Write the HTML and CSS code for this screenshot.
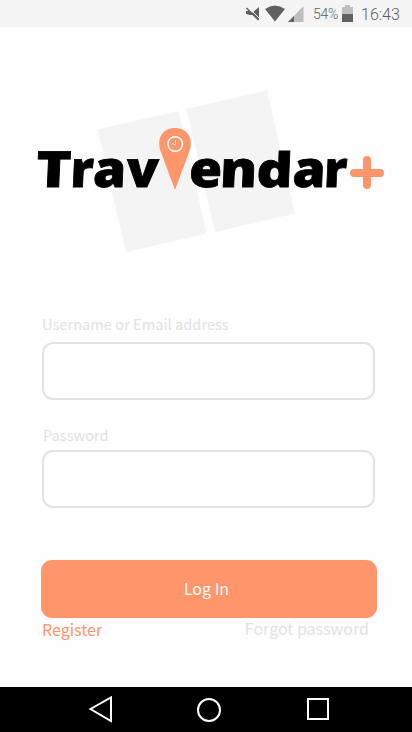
FILE: index.html
```html
<!DOCTYPE html>
<html lang="en">
<head>
<meta charset="utf-8">
<title>Travlendar+</title>
<link rel="stylesheet" href="styles.css">
</head>
<body>
<header class="status">
  <svg class="status-icons" width="70" height="27" viewBox="244 0 70 27">
    <path fill="#606060" d="M246 11h4l2 2 7-6v13l-6-5h-3l-4-1z"/>
    <path stroke="#f4f4f4" stroke-width="1" d="M248 7l12 12"/>
    <path stroke="#606060" stroke-width="1.5" d="M246.500 8l12 12"/>
    <path fill="#606060" d="M265 9q10-7 20 0L275 21.500z"/>
    <path fill="#bebebe" d="M303.500 6v16H288z"/>
    <path fill="#606060" d="M294 16v6h-6z"/>
  </svg>
  <span class="percent">54%</span>
  <svg class="battery" width="11" height="17" viewBox="0 0 11 17">
    <path fill="#bebebe" d="M0 2h3V0h5v2h3v8H0z"/>
    <path fill="#606060" d="M0 9h11v8H0z"/>
  </svg>
  <time class="clock">16:43</time>
</header>
<main class="screen">
  <svg class="logo" width="412" height="287" viewBox="0 27 412 287">
    <path fill="#f4f4f4" d="M97.500 129.500L178.500 111 206.500 233.500 126 252zM186.500 109L267 90.500 295 213.500 215 232z"/>
    <g transform="translate(0 187) skewX(-2.500)">
      <text class="wordmark"><tspan x="35.500" textLength="35" lengthAdjust="spacingAndGlyphs">T</tspan><tspan x="70" textLength="23" lengthAdjust="spacingAndGlyphs">r</tspan><tspan x="92.500" textLength="33" lengthAdjust="spacingAndGlyphs">a</tspan><tspan x="126" textLength="32" lengthAdjust="spacingAndGlyphs">v</tspan></text>
      <text class="wordmark"><tspan x="188.500" textLength="33" lengthAdjust="spacingAndGlyphs">e</tspan><tspan x="219.500" textLength="37" lengthAdjust="spacingAndGlyphs">n</tspan><tspan class="tall" x="256" textLength="36" lengthAdjust="spacingAndGlyphs">d</tspan><tspan x="292" textLength="33" lengthAdjust="spacingAndGlyphs">a</tspan><tspan x="323.500" textLength="23" lengthAdjust="spacingAndGlyphs">r</tspan></text>
    </g>
    <path fill="#ff966b" d="M175 190L160.500 151C156 138 163 128 175 128S194 138 189.500 151z"/>
    <circle cx="175.200" cy="144" r="7.300" fill="none" stroke="#fff" stroke-width="1.500"/>
    <path d="M175.500 140v5l-3.500-1.500" fill="none" stroke="#fff" stroke-width=".8"/>
    <path d="M354 173h26M367 160v25" stroke="#ff966b" stroke-width="8" stroke-linecap="round"/>
  </svg>
  <form class="login">
    <label class="label" for="user">Username or Email address</label>
    <input class="field" id="user" type="text">
    <label class="label label-password" for="pass">Password</label>
    <input class="field" id="pass" type="password">
    <button class="submit" type="button">Log In</button>
    <div class="links"><a class="register">Register</a><a class="forgot">Forgot password</a></div>
  </form>
</main>
<nav class="navbar">
  <svg width="412" height="45" viewBox="0 687 412 45" fill="none" stroke="#fff" stroke-width="2">
    <path d="M90.500 709L111 697.500v23.500z"/>
    <circle cx="209" cy="710" r="11"/>
    <path d="M308 699h20v20h-20z"/>
  </svg>
</nav>
</body>
</html>
```
FILE: styles.css
```css
* { box-sizing: border-box; }
body {
  margin: 0;
  width: 412px;
  height: 732px;
  display: flex;
  flex-direction: column;
  overflow: hidden;
  background: #fefefe;
  font-family: "Noto Sans CJK SC", "Noto Sans", sans-serif;
}
.status {
  height: 27px;
  flex: none;
  display: flex;
  align-items: center;
  padding-left: 244px;
  background: #f4f4f4;
  color: #606060;
  font-family: Roboto, sans-serif;
}
.status-icons { flex: none; }
.percent { width: 28px; font-size: 14px; font-weight: 300; letter-spacing: -0.3px; margin-left: -1px; padding-top: 1px; }
.battery { flex: none; margin-left: 1px; }
.clock { margin-left: 8px; font-size: 16px; font-weight: 300; padding-top: 2px; }
.screen { height: 660px; flex: none; }
.logo { display: block; }
.wordmark {
  font-family: "Open Sans", sans-serif;
  font-weight: 800;
  font-size: 50px;
  fill: #000;
  stroke: #000;
  stroke-width: 0.8px;
}
.wordmark .tall { font-size: 47.5px; }
.login { padding: 0 35px 0 41px; }
.label {
  display: block;
  height: 28px;
  padding-left: 1px;
  font-size: 14.65px;
  line-height: 20px;
  color: #e2e2e2;
}
.label-password { height: 25px; margin-top: 25px; padding-left: 2px; }
.field {
  display: block;
  width: 333px;
  height: 58px;
  margin: 0 0 0 1px;
  padding: 0 14px;
  border: 2px solid #e2e2e2;
  border-radius: 11px;
  background: #fefefe;
  outline: none;
  font: inherit;
}
.submit {
  display: block;
  width: 336px;
  height: 58px;
  margin-top: 52px;
  padding: 0 0 2px;
  border: 0;
  border-radius: 11px;
  background: #ff966b;
  color: #fff;
  font: inherit;
  font-size: 16px;
  text-indent: -5px;
}
.links {
  display: flex;
  justify-content: space-between;
  padding: 0 8px 0 1px;
  font-size: 16px;
  line-height: 20px;
}
.register { color: #ff966b; padding-top: 1px; }
.forgot { color: #e2e2e2; }
.navbar { height: 45px; flex: none; background: #000; }
.navbar svg { display: block; }
```
